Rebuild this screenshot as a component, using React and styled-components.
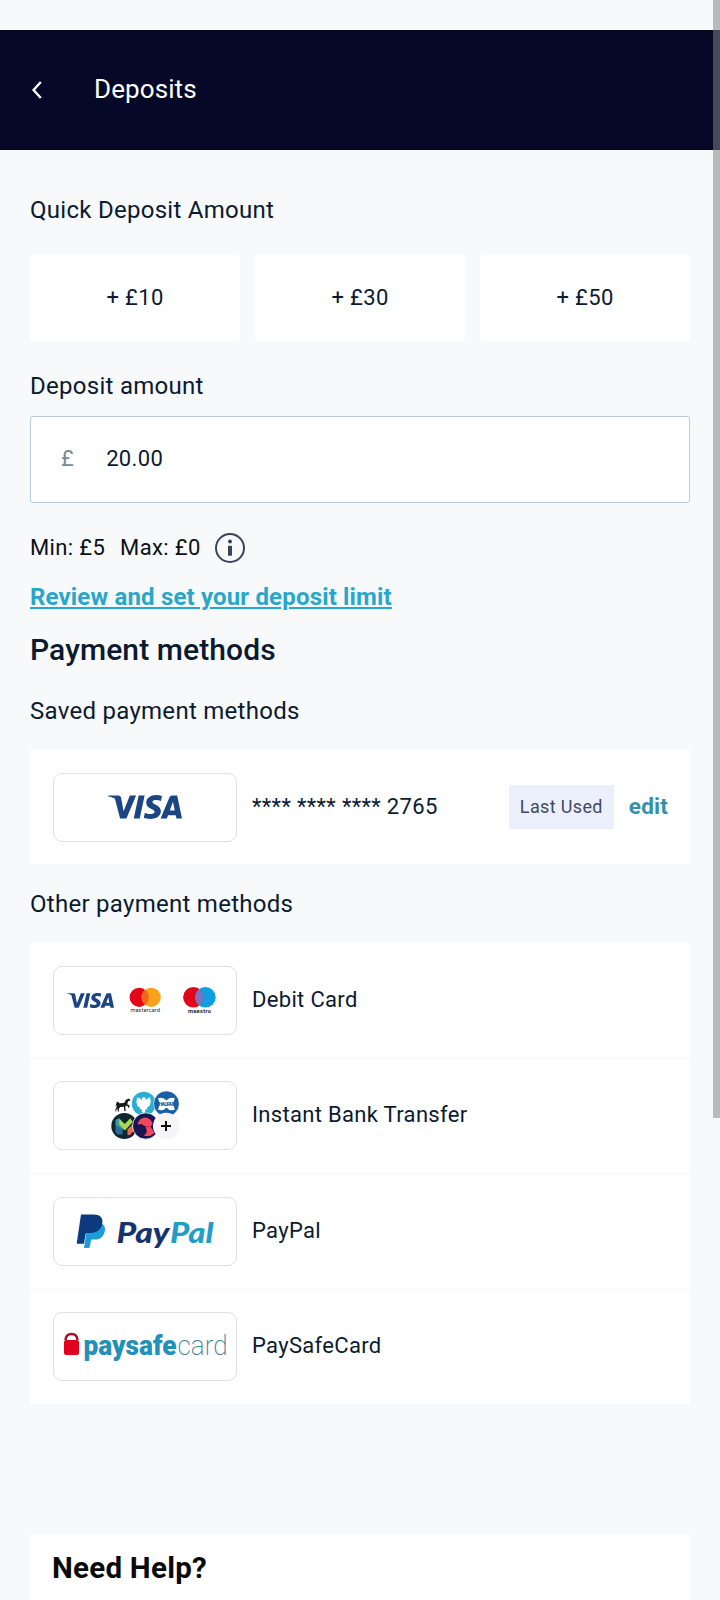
import styled, { createGlobalStyle } from 'styled-components';
import { SiVisa } from 'react-icons/si';

const amounts = ['+ £10', '+ £30', '+ £50'];

const CardsLogo = () => (
  <svg width='184' height='69' viewBox='0 0 184 69'>
    <SiVisa x='14' y='11' size={47} color='#1b4583' />
    <circle cx='86.2' cy='31.3' r='9.6' fill='#e3061b' />
    <circle cx='98.2' cy='31.3' r='9.6' fill='#f9a11b' />
    <path d='M92.2 23.8a9.6 9.6 0 0 1 0 15a9.6 9.6 0 0 1 0-15z' fill='#f2661a' />
    <text x='77.5' y='46' textLength='29.5' fontSize='5.4' fontWeight='400' fill='#222'>
      mastercard
    </text>
    <circle cx='140.4' cy='31.2' r='10.3' fill='#e3061b' />
    <circle cx='152.4' cy='31.2' r='10.3' fill='#0c9fe2' />
    <path d='M146.4 22.9a10.3 10.3 0 0 1 0 16.6a10.3 10.3 0 0 1 0-16.6z' fill='#7673c0' />
    <text x='135' y='46.6' textLength='23' fontSize='5.8' fontWeight='700' fill='#222'>
      maestro
    </text>
  </svg>
);

const BanksLogo = () => (
  <svg width='184' height='69' viewBox='0 0 184 69'>
    {/* horse */}
    <path
      d='M63.500 21.500l1.500-1 1.200 1.800 5-.2 1.600-3.200 3-1.500 1.500 1.600-.4 1-1.800 0-.8 3.200 2.400 1.400-.8 2.400-.8-.2.1-1.400-2.400-.8-.6 2 .6 3.400h-1.400l-.6-4.200-3.400.2-1.600 1.800.3 2.800h-1.200l-.5-3-1.200 1.400.2 1.400-1-.2v-1.800l1.200-2.200.2-2.200-1.400 2z'
      fill='#16191b'
    />
    {/* eagle */}
    <circle cx='90.800' cy='22.700' r='12' fill='#2aafd3' />
    <path
      d='M84.500 16.500c1.800.200 3.300 1.200 4.200 3l.4-2.600 1.800-1 1.600 1 .3 2.600c1-1.800 2.400-2.800 4.200-3 1.600 4 .4 8.200-2.200 9.800l-1-.3.6 2.400-1.800-.4-.5 3-1.400 1-1.600-1-.6-3-1.800.5.500-2.600-1.200.4c-2.400-1.900-3.400-6-1.500-9.800z'
      fill='#fff'
    />
    {/* crossed ribbon */}
    <circle cx='113.400' cy='22.700' r='12.800' fill='#1a5fa6' stroke='#fff' strokeWidth='.6' />
    <path
      d='M105 17.200q5.400-1.600 8.400 2.400q3-4 8.400-2.400l-1.800 5.300 1.800 6.300q-5.400 1.600-8.400-2.400q-3 4-8.400 2.400l1.800-6.300z'
      fill='#fff'
    />
    <text x='105.800' y='24.800' textLength='15.500' fontSize='4.800' fontWeight='900' fill='#1a5fa6'>
      HALIFAX
    </text>
    {/* two-tone chevron */}
    <circle cx='71.300' cy='45' r='13' fill='#12262f' />
    <path d='M62.500 39l3.500-2 5.500 6.500-2 6-7-4z' fill='#2f9fa8' />
    <path d='M62.500 43.500l7 5v5h-4.500l-2.500-2z' fill='#2a6f93' />
    <path d='M66.500 38l5.300 5 5.500-5.800 2.500 3.800-8 8.500-5.800-6.500z' fill='#a9d84c' />
    <path d='M74.500 48.500l5.500-5.500v7.500l-3 3.500h-2.500z' fill='#ee6a4f' />
    {/* folded ribbon */}
    <circle cx='92.700' cy='45' r='13.200' fill='#191650' stroke='#fff' strokeWidth='.8' />
    <path d='M84.500 43.500q1.500-6.500 7.500-7 6 .5 7.500 6.500l-2 2.500 4 6.500-4.500 3h-6l3-4.500-1.500-5-4-2.500z' fill='#f2475c' />
    <path d='M92.500 45.500l5 0 1.500-2.500' fill='none' stroke='#b72b50' strokeWidth='.8' />
    {/* more */}
    <circle cx='113.200' cy='45' r='13.200' fill='#f5f5f7' />
    <path d='M113 40v10M108 45h10' stroke='#111' strokeWidth='2' />
  </svg>
);

const PaypalLogo = () => (
  <svg width='184' height='69' viewBox='0 0 184 69'>
    <path
      d='M31 51l3.700-24h14.600c3 2 3.300 5.500 2 9-1.600 4.600-5 6.600-9.800 6.600h-2.200c-.8 0-1.200.5-1.400 1.200l-1.200 6.200c-.1.700-.6 1-1.200 1z'
      fill='#1b9bd8'
    />
    <path
      d='M28.600 17.500h11.800c6.400 0 9.900 3 8.900 8.800-1.100 6.600-5.300 9.700-11.900 9.700h-3.200c-.9 0-1.400.5-1.600 1.300l-1.600 9.400h-6.400c-.6 0-.9-.4-.8-1l4-26.900c.1-.8.400-1.300.8-1.300z'
      fill='#0c3a7c'
    />
    <Wordmark x='63.500' y='45.500' textLength='53' lengthAdjust='spacingAndGlyphs' fill='#16336e'>
      Pay
    </Wordmark>
    <Wordmark x='117' y='45.500' textLength='43.500' lengthAdjust='spacingAndGlyphs' fill='#1f9dcb'>
      Pal
    </Wordmark>
  </svg>
);

const PaysafeLogo = () => (
  <svg width='184' height='69' viewBox='0 0 184 69'>
    <path d='M12.500 28q.5-6 6-6t6 6' fill='none' stroke='#a3152c' strokeWidth='2.400' />
    <rect x='11' y='28' width='15' height='15' rx='2' fill='#e2001f' />
    <SafeWord x='30.500' y='43' textLength='93' lengthAdjust='spacingAndGlyphs'>
      paysafe
    </SafeWord>
    <CardWord x='124.500' y='43' textLength='50' lengthAdjust='spacingAndGlyphs'>
      card
    </CardWord>
  </svg>
);

const InfoIcon = () => (
  <svg width='30' height='30' viewBox='0 0 30 30'>
    <circle cx='15' cy='15' r='14' fill='none' stroke='#3a4359' strokeWidth='2' />
    <circle cx='15' cy='8.400' r='2' fill='#3a4359' />
    <rect x='13' y='12.800' width='4' height='9.900' fill='#3a4359' />
  </svg>
);

const methods = [
  { name: 'Debit Card', logo: <CardsLogo /> },
  { name: 'Instant Bank Transfer', logo: <BanksLogo /> },
  { name: 'PayPal', logo: <PaypalLogo /> },
  { name: 'PaySafeCard', logo: <PaysafeLogo /> },
];

const App = () => {
  return (
    <Page>
      <GlobalStyle />
      <Header>
        <svg width='11' height='18' viewBox='0 0 11 18'>
          <path d='M9.800 1L2.600 9l7.200 8' fill='none' stroke='#fff' strokeWidth='2.400' />
        </svg>
        <h1>Deposits</h1>
      </Header>
      <Content>
        <Label>Quick Deposit Amount</Label>
        <Amounts>
          {amounts.map((amount) => (
            <AmountBtn key={amount}>{amount}</AmountBtn>
          ))}
        </Amounts>
        <Label>Deposit amount</Label>
        <AmountField>
          <span>£</span>
          20.00
        </AmountField>
        <Limits>
          <span>Min: £5</span>
          <span>Max: £0</span>
          <InfoIcon />
        </Limits>
        <LimitLink href='#'>Review and set your deposit limit</LimitLink>
        <Title>Payment methods</Title>
        <Label>Saved payment methods</Label>
        <Panel>
          <Row $height='114px'>
            <Chip>
              <SiVisa size={74} color='#1b4583' />
            </Chip>
            <Name>**** **** **** 2765</Name>
            <Badge>Last Used</Badge>
            <EditBtn>edit</EditBtn>
          </Row>
        </Panel>
        <Label>Other payment methods</Label>
        <Panel>
          {methods.map(({ name, logo }) => (
            <Row key={name} $height='115.500px' $divided>
              <Chip>{logo}</Chip>
              <Name>{name}</Name>
            </Row>
          ))}
        </Panel>
        <Help>
          <h2>Need Help?</h2>
        </Help>
      </Content>
      <ScrollThumb />
    </Page>
  );
};

const GlobalStyle = createGlobalStyle`
  * {
    box-sizing: border-box;
    margin: 0;
    padding: 0;
  }

  body {
    background: #f7f9fb;
    color: #0b1a30;
    font-family: Roboto, sans-serif;
    font-size: 22px;
    letter-spacing: 0.35px;
  }

  button {
    border: 0;
    background: 0;
    color: inherit;
    font: inherit;
    letter-spacing: inherit;
  }

  svg {
    display: block;
    flex-shrink: 0;
    letter-spacing: 0;
  }
`;

const Page = styled.div`
  height: 1600px;
  padding-top: 30px;
  overflow: hidden;
`;

const Header = styled.header`
  display: flex;
  align-items: center;
  gap: 52px;
  height: 120px;
  padding-left: 31px;
  background: #050827;
  color: #fff;

  h1 {
    padding-bottom: 2px;
    font-size: 26px;
    font-weight: 400;
    letter-spacing: 0.1px;
  }
`;

const Content = styled.main`
  display: flex;
  flex-direction: column;
  padding: 45px 30px 0;
`;

const Label = styled.h3`
  font-size: 24px;
  font-weight: 400;
  line-height: 30px;
  letter-spacing: 0.28px;
`;

const Amounts = styled.div`
  display: grid;
  grid-template-columns: repeat(3, 1fr);
  gap: 15px;
  margin: 30px 0;
`;

const AmountBtn = styled.button`
  height: 86px;
  padding-bottom: 2px;
  border-radius: 2px;
  background: #fff;
`;

const AmountField = styled.div`
  display: flex;
  align-items: center;
  gap: 32px;
  height: 87px;
  margin: 15px 0 30px;
  padding: 0 30px 2px;
  border: 1px solid #b9cbdc;
  border-radius: 3px;
  background: #fff;

  span {
    color: #7b8896;
  }
`;

const Limits = styled.div`
  display: flex;
  align-items: center;
  gap: 15px;
  height: 30px;
  color: #0c0f16;

  span {
    padding-bottom: 2px;
  }

  svg {
    margin-left: -1px;
  }
`;

const LimitLink = styled.a`
  align-self: flex-start;
  margin-top: 19px;
  color: #2ba6cb;
  font-size: 24px;
  font-weight: 700;
  line-height: 30px;
  letter-spacing: 0.17px;
`;

const Title = styled.h2`
  margin: 18px 0 26px;
  font-size: 30px;
  font-weight: 500;
  line-height: 40px;
  letter-spacing: 0.1px;
`;

const Panel = styled.section`
  margin: 24px 0;
  border-radius: 2px;
  background: #fff;

  & + h3 {
    margin-top: 1px;
  }
`;

const Row = styled.div`
  display: flex;
  align-items: center;
  height: ${({ $height }) => $height};
  padding: 0 22px 0 23px;
  border-bottom: ${({ $divided }) => ($divided ? '1px solid #f7f9fb' : 0)};
`;

const Chip = styled.div`
  display: flex;
  align-items: center;
  justify-content: center;
  width: 184px;
  height: 69px;
  border: 1px solid #dfe1e4;
  border-radius: 9px;
`;

const Name = styled.span`
  flex: 1;
  padding: 0 0 2px 15px;
  letter-spacing: 0.32px;
`;

const Badge = styled.span`
  width: 105px;
  margin-right: 15px;
  background: #ebf0fc;
  color: #3f4a62;
  font-size: 18px;
  line-height: 44px;
  letter-spacing: 0.35px;
  text-align: center;
`;

const EditBtn = styled.button`
  padding-bottom: 2px;
  color: #3590ad;
  font-size: 22.500px;
  font-weight: 700;
  letter-spacing: 0.2px;
`;

const Help = styled.section`
  height: 80px;
  margin-top: 106px;
  padding: 13px 22px;
  background: #fff;
  color: #0a0a0a;

  h2 {
    font-size: 29.5px;
    font-weight: 700;
    line-height: 40px;
    letter-spacing: 0.25px;
  }
`;

const Wordmark = styled.text`
  font-family: Lato, sans-serif;
  font-size: 28px;
  font-style: italic;
  font-weight: 900;
`;

const SafeWord = styled.text`
  fill: #2290b8;
  font-size: 28px;
  font-weight: 900;
`;

const CardWord = styled.text`
  fill: #3b8299;
  font-size: 28px;
  font-weight: 200;
`;

const ScrollThumb = styled.div`
  position: fixed;
  top: 0;
  right: 0;
  width: 7px;
  height: 1118px;
  background: rgba(130, 130, 130, 0.53);
`;

export default App;
